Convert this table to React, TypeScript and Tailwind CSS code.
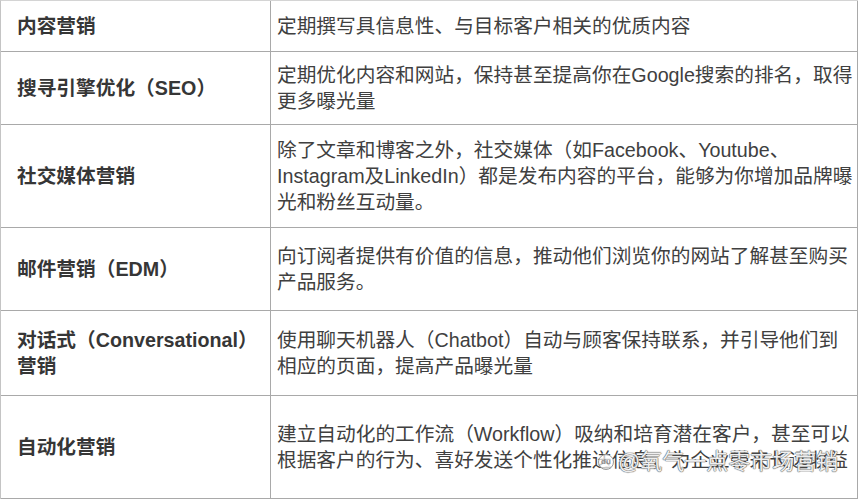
const ROWS = [
  {
    title: '内容营销',
    body: '定期撰写具信息性、与目标客户相关的优质内容',
    h: 'h-[51px]',
  },
  {
    title: '搜寻引擎优化（SEO）',
    body: '定期优化内容和网站，保持甚至提高你在Google搜索的排名，取得更多曝光量',
    h: 'h-[73px]',
  },
  {
    title: '社交媒体营销',
    body: '除了文章和博客之外，社交媒体（如Facebook、Youtube、Instagram及LinkedIn）都是发布内容的平台，能够为你增加品牌曝光和粉丝互动量。',
    h: 'h-[103px]',
  },
  {
    title: '邮件营销（EDM）',
    body: '向订阅者提供有价值的信息，推动他们浏览你的网站了解甚至购买产品服务。',
    h: 'h-[83px]',
  },
  {
    title: '对话式（Conversational）营销',
    body: '使用聊天机器人（Chatbot）自动与顾客保持联系，并引导他们到相应的页面，提高产品曝光量',
    h: 'h-[85px]',
  },
  {
    title: '自动化营销',
    body: '建立自动化的工作流（Workflow）吸纳和培育潜在客户，甚至可以根据客户的行为、喜好发送个性化推送信息，为企业带来长远收益',
    h: 'h-[103px]',
  },
];

export default function App() {
  return (
    <div className="relative w-[859px] h-[500px] overflow-hidden bg-white font-['Liberation_Sans','Noto_Sans_CJK_SC',sans-serif] text-[19.7px] leading-[26px]">
      <div className="w-[858px] border-t border-l border-t-[#d4d4d4] border-l-[#c4c4c4]">
        {ROWS.map((row) => (
          <div key={row.title} className={`flex border-b border-[#a9a9a9] ${row.h}`}>
            <div className="w-[270px] shrink-0 flex items-center pl-4 pr-1 border-r border-[#a9a9a9] font-bold text-[#363636]">
              {row.title}
            </div>
            <div className="flex-1 flex items-center pl-1.5 border-r border-[#a9a9a9] text-[#404040]">
              <p>{row.body}</p>
            </div>
          </div>
        ))}
      </div>

      {/* watermark */}
      <div className="absolute left-[598px] top-[448px] flex items-center gap-1 text-[22px] leading-[28px] text-white/90 [text-shadow:0_0_1px_#5e5e5e,0_0_1px_#5e5e5e,0_0_1px_#5e5e5e]">
        <span className="flex h-[16px] w-[16px] items-center justify-center rounded-full border border-[#9a9a9a] bg-white/70 text-[8px] leading-none font-bold text-[#8a8a8a] [text-shadow:none]">
          du
        </span>
        <span>@氧气一点零市场营销</span>
      </div>
    </div>
  );
}
